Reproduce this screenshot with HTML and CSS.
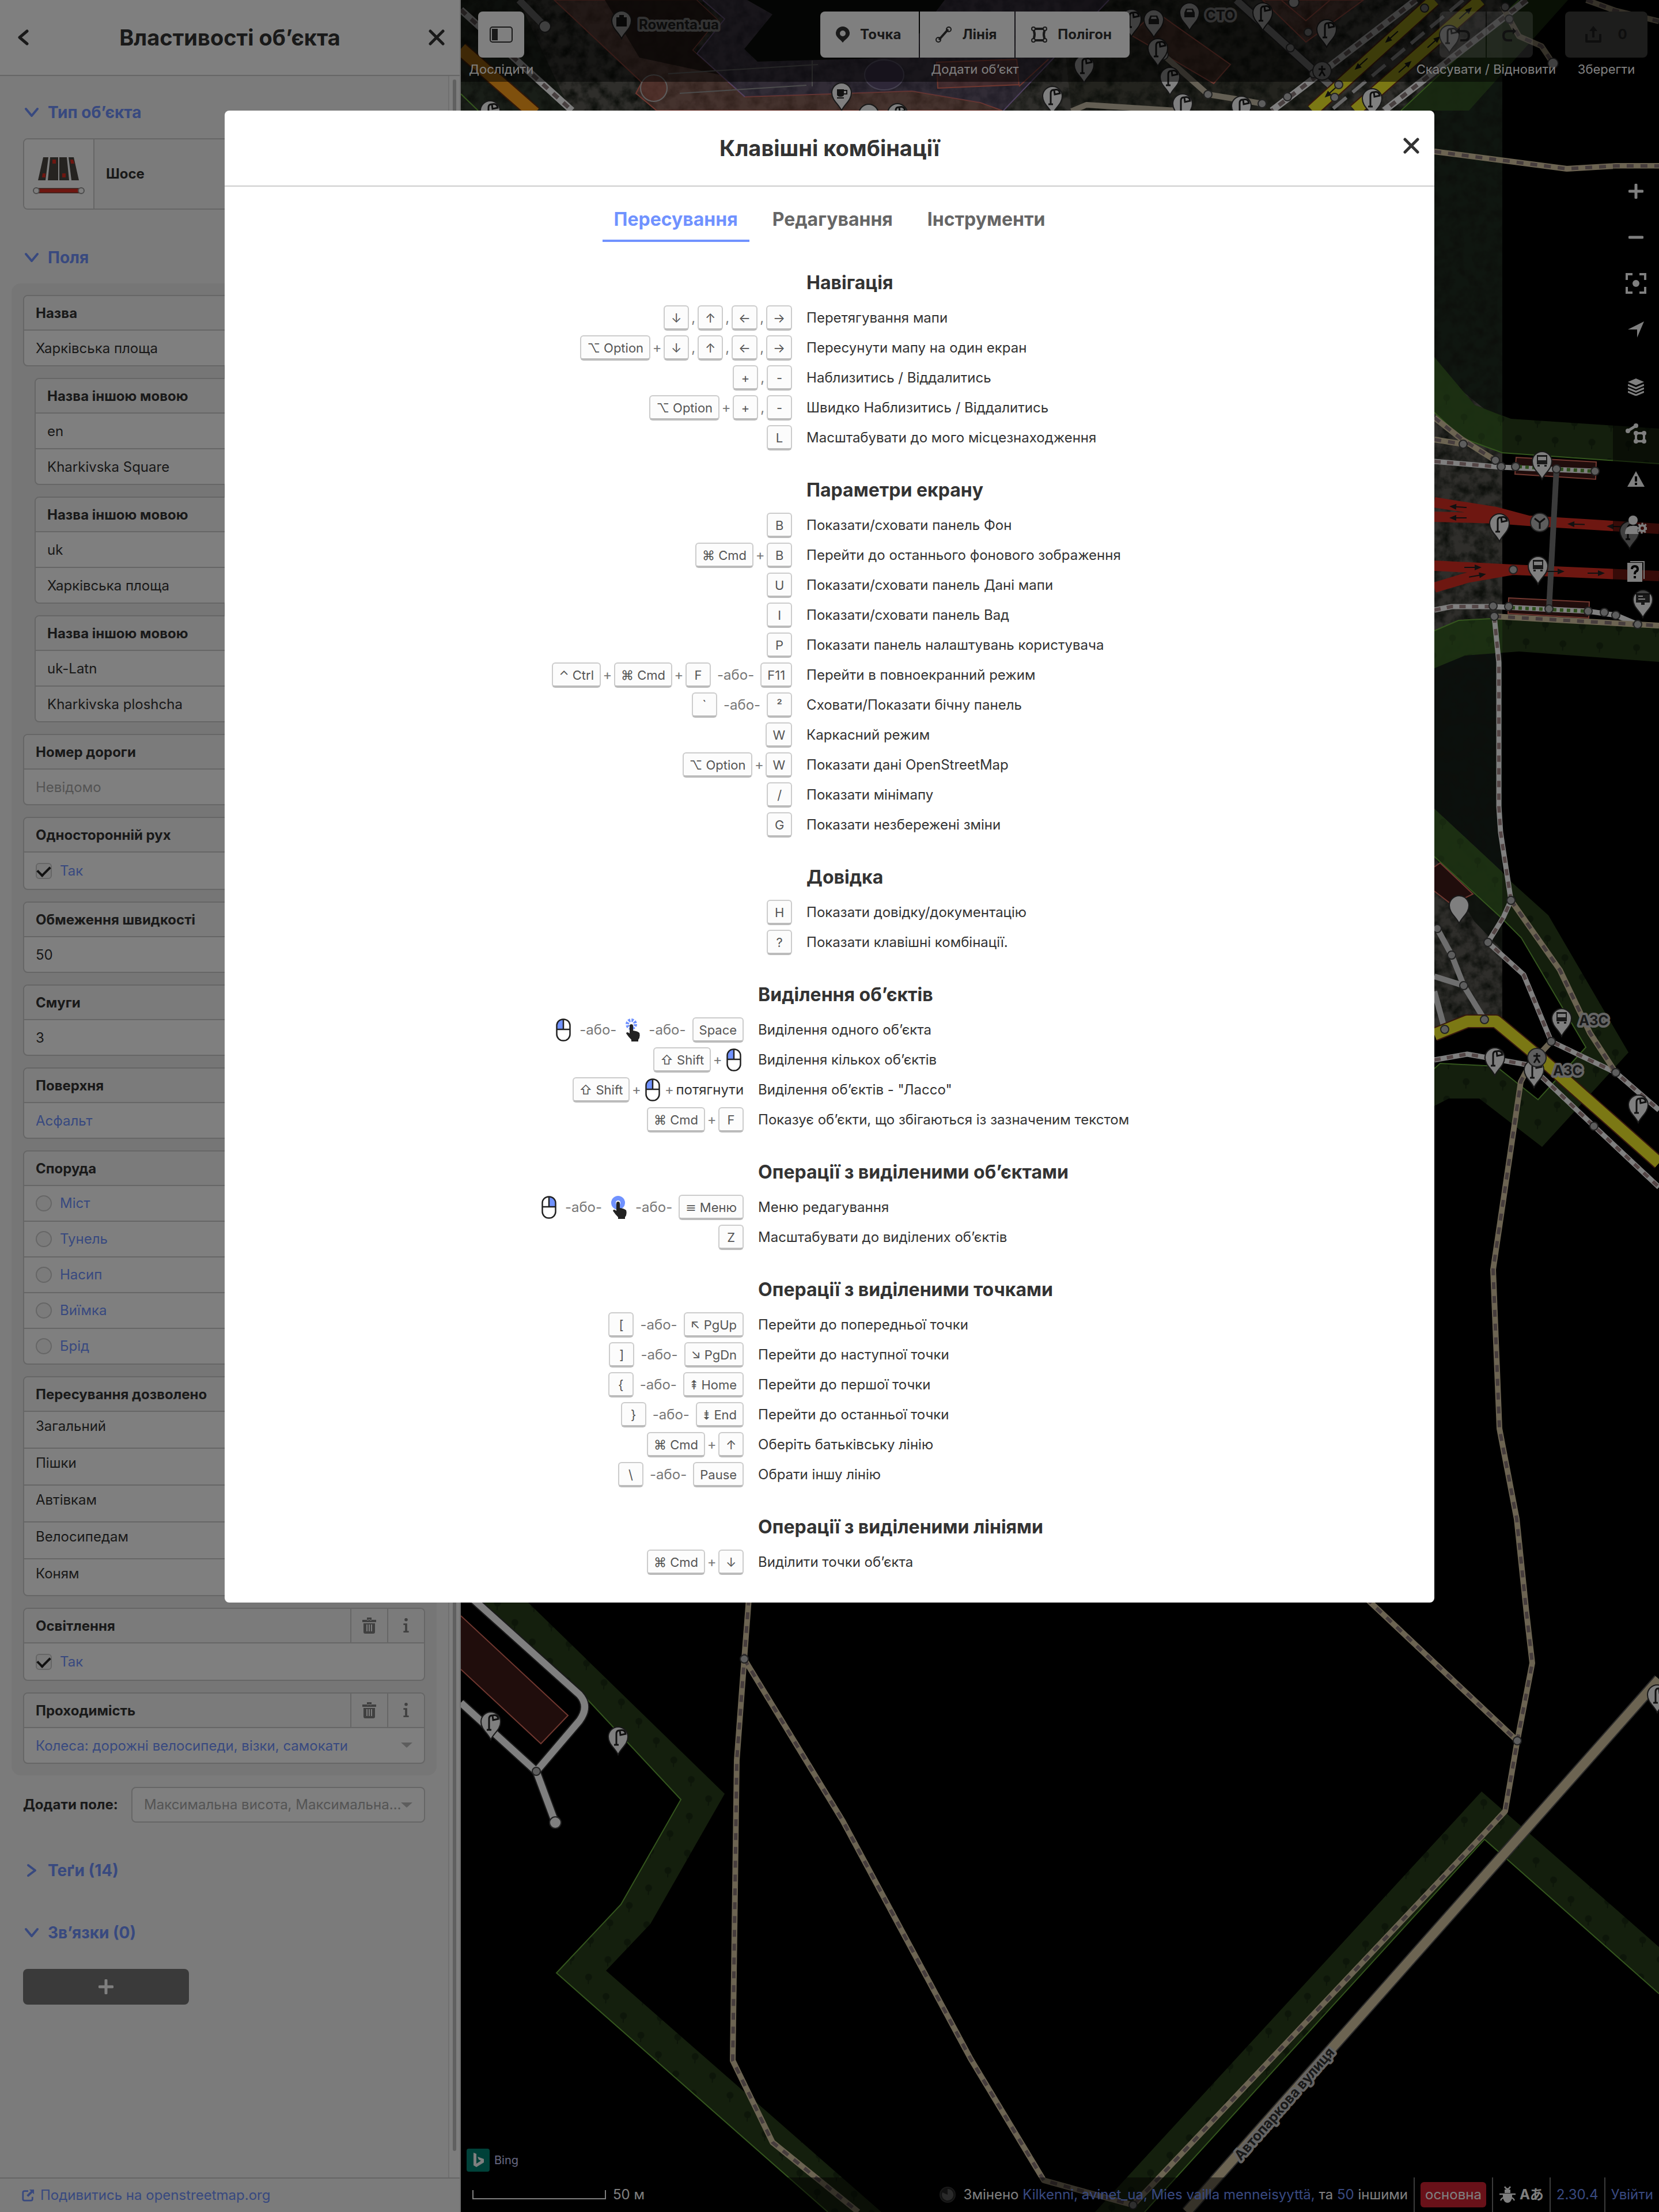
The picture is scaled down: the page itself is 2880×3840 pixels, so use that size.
FILE: index.html
```html
<!DOCTYPE html>
<html lang="uk">
<head>
<meta charset="utf-8">
<meta name="viewport" content="width=device-width, initial-scale=1">
<title>Властивості обʼєкта</title>
<link rel="stylesheet" href="styles.css">
</head>
<body>
<svg class="sprite" aria-hidden="true">
  <symbol id="i-close" viewBox="0 0 28 28"><path d="M3 3L25 25M25 3L3 25" fill="none" stroke="currentColor" stroke-width="5" stroke-linecap="round"/></symbol>
  <symbol id="i-back" viewBox="0 0 28 28"><path d="M21 3L8 14L21 25" fill="none" stroke="currentColor" stroke-width="5" stroke-linecap="round" stroke-linejoin="round"/></symbol>
  <symbol id="i-down" viewBox="0 0 24 24"><path d="M2 6L12 18L22 6" fill="none" stroke="currentColor" stroke-width="4" stroke-linecap="round" stroke-linejoin="round"/></symbol>
  <symbol id="i-right" viewBox="0 0 24 24"><path d="M6 3L18 12L6 21" fill="none" stroke="currentColor" stroke-width="4" stroke-linecap="round" stroke-linejoin="round"/></symbol>
  <symbol id="i-trash" viewBox="0 0 24 28"><path d="M0 4h24v4H0zM8 0h8v5h-3V3h-2v2H8zM2 10h20v15q0 3-3 3H5q-3 0-3-3zM7 12v12h2V12zm4 0v12h2V12zm4 0v12h2V12z" fill="currentColor" fill-rule="evenodd"/></symbol>
  <symbol id="i-info" viewBox="0 0 12 28"><circle cx="6" cy="3" r="3" fill="currentColor"/><path d="M1 10h7v14h3v3H1v-3h3V13H1z" fill="currentColor"/></symbol>
  <symbol id="i-ext" viewBox="0 0 24 24"><path d="M12 4H5Q2 4 2 7v12q0 3 3 3h12q3 0 3-3v-4" fill="none" stroke="currentColor" stroke-width="3"/><path d="M14 1h9v9l-3-3-8 8-3-3 8-8z" fill="currentColor"/></symbol>
  <symbol id="i-side" viewBox="0 0 40 28"><rect x="1" y="1" width="38" height="26" rx="4" fill="none" stroke="currentColor" stroke-width="2"/><path d="M4 4h10v20H4z" fill="currentColor"/></symbol>
  <symbol id="i-point" viewBox="0 0 24 28"><path d="M12 0a12 12 0 0 1 12 12c0 7-8 10-12 16C8 22 0 19 0 12A12 12 0 0 1 12 0zm0 7a5 5 0 1 0 0 10a5 5 0 0 0 0-10z" fill="currentColor"/></symbol>
  <symbol id="i-line" viewBox="0 0 28 28"><path d="M6 23L22 5" stroke="currentColor" stroke-width="4"/><circle cx="23" cy="5" r="4" fill="none" stroke="currentColor" stroke-width="2"/><circle cx="5" cy="23" r="4" fill="none" stroke="currentColor" stroke-width="2"/></symbol>
  <symbol id="i-area" viewBox="0 0 28 28"><path d="M5 4h18v4q-2 6 0 12v4H5v-4q2-6 0-12z" fill="none" stroke="currentColor" stroke-width="4"/><g fill="#fff" stroke="currentColor" stroke-width="2"><circle cx="4" cy="4" r="3"/><circle cx="24" cy="4" r="3"/><circle cx="4" cy="24" r="3"/><circle cx="24" cy="24" r="3"/></g></symbol>
  <symbol id="i-undo" viewBox="0 0 28 28"><path d="M9 2L3 8l6 6V10h8q6 0 6 6t-6 6h-7v4h7q10 0 10-10T17 6H9z" fill="currentColor"/></symbol>
  <symbol id="i-redo" viewBox="0 0 28 28"><path d="M19 2l6 6-6 6V10h-8q-6 0-6 6t6 6h7v4h-7Q1 26 1 16T11 6h8z" fill="currentColor"/></symbol>
  <symbol id="i-save" viewBox="0 0 28 30"><path d="M2 14v13h24V14" fill="none" stroke="currentColor" stroke-width="4" stroke-linejoin="round"/><path d="M14 0l7 9h-5v11h-4V9H7z" fill="currentColor"/></symbol>
  <symbol id="i-plus" viewBox="0 0 26 26"><path d="M13 2v22M2 13h22" stroke="currentColor" stroke-width="5" stroke-linecap="round"/></symbol>
  <symbol id="i-minus" viewBox="0 0 26 26"><path d="M2 13h22" stroke="currentColor" stroke-width="5" stroke-linecap="round"/></symbol>
  <symbol id="i-zoomto" viewBox="0 0 36 36"><path d="M2 12V2h10M24 2h10v10M34 24v10H24M12 34H2V24" fill="none" stroke="currentColor" stroke-width="4"/><circle cx="18" cy="18" r="6" fill="currentColor"/></symbol>
  <symbol id="i-geo" viewBox="0 0 28 28"><path d="M28 0L16 28V14H0z" fill="currentColor"/></symbol>
  <symbol id="i-layers" viewBox="0 0 28 30"><path d="M14 0l14 6-14 6L0 6z" fill="currentColor"/><path d="M0 11l14 6 14-6M0 17l14 6 14-6M0 23l14 6 14-6" fill="none" stroke="currentColor" stroke-width="3"/></symbol>
  <symbol id="i-data" viewBox="0 0 36 36"><path d="M4 14L18 5" stroke="currentColor" stroke-width="5"/><circle cx="4" cy="14" r="4" fill="currentColor"/><circle cx="18" cy="5" r="4" fill="currentColor"/><path d="M18 18h14v14H18z" fill="none" stroke="currentColor" stroke-width="4"/><g fill="currentColor"><circle cx="18" cy="18" r="4"/><circle cx="32" cy="18" r="4"/><circle cx="18" cy="32" r="4"/><circle cx="32" cy="32" r="4"/></g></symbol>
  <symbol id="i-warn" viewBox="0 0 30 28"><path d="M15 0l15 27H0zM13 9v9h4V9zm0 11v4h4v-4z" fill="currentColor" fill-rule="evenodd"/></symbol>
  <symbol id="i-user" viewBox="0 0 38 34"><circle cx="14" cy="8" r="8" fill="currentColor"/><path d="M0 32q0-14 12-14h8q4 2 2 6t2 8z" fill="currentColor"/><circle cx="30" cy="22" r="5" fill="none" stroke="currentColor" stroke-width="4"/><circle cx="30" cy="22" r="8" fill="none" stroke="currentColor" stroke-width="3" stroke-dasharray="3 3"/></symbol>
  <symbol id="i-help" viewBox="0 0 30 36"><path d="M5 1h24v30" fill="none" stroke="currentColor" stroke-width="2"/><path d="M0 3h26v33H0z" fill="currentColor"/><path d="M8 14q0-5 5-5t5 5q0 3-3 4-2 1-2 5" fill="none" stroke="#000" stroke-width="4"/><path d="M11 26h4v4h-4z"/></symbol>
  <symbol id="i-mouse-l" viewBox="0 0 26 40"><path d="M13 2v17H2v-6Q2 2 13 2z" fill="#7092ff"/><rect x="1.500" y="1.500" width="23" height="37" rx="11" fill="none" stroke="#222" stroke-width="2.500"/><path d="M2 19h22M13 2v17" stroke="#222" stroke-width="2.500"/></symbol>
  <symbol id="i-mouse-r" viewBox="0 0 26 40"><path d="M13 2v17h11v-6Q24 2 13 2z" fill="#7092ff"/><rect x="1.500" y="1.500" width="23" height="37" rx="11" fill="none" stroke="#222" stroke-width="2.500"/><path d="M2 19h22M13 2v17" stroke="#222" stroke-width="2.500"/></symbol>
  <symbol id="i-hand" viewBox="0 0 26 40"><path d="M11 10q3 0 3 3v8q8 1 11 4 2 7-2 12v3H11v-3Q6 32 2 26q1-4 6 0V13q0-3 3-3z" fill="#222"/></symbol>
  <symbol id="i-tap" viewBox="0 0 26 40"><circle cx="11" cy="10" r="7" fill="none" stroke="#7092ff" stroke-width="6" stroke-dasharray="3.500 2"/><use href="#i-hand"/></symbol>
  <symbol id="i-hold" viewBox="0 0 28 40"><circle cx="13" cy="12" r="8" fill="none" stroke="#7092ff" stroke-width="8"/><use href="#i-hand" width="26" height="40" x="2"/></symbol>
  <symbol id="i-bug" viewBox="0 0 30 30"><g fill="none" stroke="currentColor" stroke-width="2.500"><path d="M10 1q5 8 10 0M1 14h28M3 25q3-6 6-4M27 25q-3-6-6-4"/></g><path d="M10 6h10v6H10zM7 13h16v7q-2 9-8 9t-8-9z" fill="currentColor"/></symbol>
  <symbol id="i-bing" viewBox="0 0 40 40"><rect width="40" height="40" rx="4" fill="#008373"/><path d="M12 7l5 2v17l8-5-4-2-2-5 11 4v6l-13 8-5-3z" fill="#fff"/></symbol>
  <symbol id="i-spin" viewBox="0 0 28 28"><circle cx="14" cy="14" r="13" fill="#222" stroke="#333" stroke-width="2"/><path d="M14 14V4a10 10 0 1 1-9 6z" fill="#555"/></symbol>
</svg>

<div class="app">
  <aside class="sidebar">
    <header class="side-head">
      <button class="icon-btn" aria-label="Назад"><svg width="28" height="28"><use href="#i-back"/></svg></button>
      <h2>Властивості обʼєкта</h2>
      <button class="icon-btn" aria-label="Закрити"><svg width="28" height="28"><use href="#i-close"/></svg></button>
    </header>
    <div class="side-body">
      <div class="side-content">
        <h3 class="section"><a href="#type"><svg width="24" height="24"><use href="#i-down"/></svg>Тип обʼєкта</a></h3>
        <button class="preset">
          <span class="preset-icon"><svg width="90" height="66" viewBox="0 0 90 66"><g fill="#4a4641"><path d="M18 2h9l-5 40H9z"/><path d="M30 2h14v40H26z"/><path d="M46 2h13l4 40H46z"/><path d="M62 2h9l9 40H67z"/></g><g fill="#dd2f22"><path d="M17 30h5v7h-6zM34 6h6v7h-6zM51 30h6v7h-6zM65 6h5l2 7h-6z"/></g><path d="M6 60h78" stroke="#70372f" stroke-width="9"/><path d="M6 60h78" stroke="#dd2f22" stroke-width="6"/><circle cx="6" cy="60" r="5" fill="#fff" stroke="#999" stroke-width="2"/><circle cx="84" cy="60" r="5" fill="#fff" stroke="#999" stroke-width="2"/></svg></span>
          <span class="preset-name">Шосе</span>
        </button>
        <h3 class="section"><a href="#fields"><svg width="24" height="24"><use href="#i-down"/></svg>Поля</a></h3>
        <div class="fields">
          <div class="field"><label class="field-label" for="f1">Назва</label><input class="row" id="f1" value="Харківська площа"></div>
          <div class="field nested"><label class="field-label" for="f2">Назва іншою мовою</label><input class="row" id="f2" value="en"><input class="row" aria-label="Назва" value="Kharkivska Square"></div>
          <div class="field nested"><label class="field-label" for="f3">Назва іншою мовою</label><input class="row" id="f3" value="uk"><input class="row" aria-label="Назва" value="Харківська площа"></div>
          <div class="field nested"><label class="field-label" for="f4">Назва іншою мовою</label><input class="row" id="f4" value="uk-Latn"><input class="row" aria-label="Назва" value="Kharkivska ploshcha"></div>
          <div class="field"><label class="field-label" for="f5">Номер дороги</label><input class="row" id="f5" placeholder="Невідомо"></div>
          <div class="field"><span class="field-label">Односторонній рух</span><label class="row check-row"><input class="tick" type="checkbox" checked>Так</label></div>
          <div class="field"><label class="field-label" for="f6">Обмеження швидкості</label><input class="row" id="f6" value="50"></div>
          <div class="field"><label class="field-label" for="f7">Смуги</label><input class="row" id="f7" value="3"></div>
          <div class="field"><label class="field-label" for="f8">Поверхня</label><input class="row linkish" id="f8" value="Асфальт"></div>
          <div class="field"><span class="field-label">Споруда</span>
            <label class="row"><input class="tick round" type="radio" name="structure">Міст</label>
            <label class="row"><input class="tick round" type="radio" name="structure">Тунель</label>
            <label class="row"><input class="tick round" type="radio" name="structure">Насип</label>
            <label class="row"><input class="tick round" type="radio" name="structure">Виїмка</label>
            <label class="row"><input class="tick round" type="radio" name="structure">Брід</label>
          </div>
          <div class="field"><span class="field-label">Пересування дозволено</span>
            <label class="row access"><span>Загальний</span><input></label>
            <label class="row access"><span>Пішки</span><input></label>
            <label class="row access"><span>Автівкам</span><input></label>
            <label class="row access"><span>Велосипедам</span><input></label>
            <label class="row access"><span>Коням</span><input></label>
          </div>
          <div class="field"><div class="field-label"><span>Освітлення</span><button aria-label="Вилучити"><svg width="24" height="28"><use href="#i-trash"/></svg></button><button aria-label="Довідка"><svg width="12" height="26"><use href="#i-info"/></svg></button></div><label class="row check-row"><input class="tick" type="checkbox" checked>Так</label></div>
          <div class="field"><div class="field-label"><label for="f9">Проходимість</label><button aria-label="Вилучити"><svg width="24" height="28"><use href="#i-trash"/></svg></button><button aria-label="Довідка"><svg width="12" height="26"><use href="#i-info"/></svg></button></div><div class="combo"><input class="row linkish" id="f9" value="Колеса: дорожні велосипеди, візки, самокати"><i class="caret"></i></div></div>
        </div>
        <div class="add-field"><label for="f10">Додати поле:</label><div class="combo boxed"><input id="f10" placeholder="Максимальна висота, Максимальна…"><i class="caret"></i></div></div>
        <h3 class="section"><a href="#tags"><svg width="24" height="24"><use href="#i-right"/></svg>Теґи (14)</a></h3>
        <h3 class="section"><a href="#relations"><svg width="24" height="24"><use href="#i-down"/></svg>Звʼязки (0)</a></h3>
        <button class="add-relation" aria-label="Додати звʼязок"><svg width="26" height="26"><use href="#i-plus"/></svg></button>
      </div>
      <div class="track"><div class="thumb"></div></div>
    </div>
    <footer class="side-foot"><a href="#osm"><svg width="22" height="22"><use href="#i-ext"/></svg>Подивитись на openstreetmap.org</a></footer>
  </aside>

  <main class="map">
    <svg class="canvas" viewBox="800 0 2080 3840" preserveAspectRatio="xMinYMin slice" aria-hidden="true">
      <defs>
        <pattern id="trees" width="64" height="64" patternUnits="userSpaceOnUse" patternTransform="rotate(3)"><rect width="64" height="64" fill="#2a411c"/><g fill="#1c2e14"><ellipse cx="16" cy="14" rx="6" ry="6"/><path d="M15 14h2v12h-2z"/><ellipse cx="48" cy="46" rx="6" ry="6"/><path d="M47 46h2v12h-2z"/></g></pattern>
        <filter id="ground" x="0" y="0" width="100%" height="100%" color-interpolation-filters="sRGB"><feTurbulence type="fractalNoise" baseFrequency="0.05" numOctaves="4" seed="4"/><feColorMatrix values="0 0 0 0 0.100  0 0 0 0 0.120  0 0 0 0 0.090  2.200 0 0 0 -0.800"/></filter>
        <g id="pin"><path d="M0 0C-5-11-17-18-17-31A17 17 0 1 1 17-31C17-18 5-11 0 0z" fill="#fff" stroke="#333" stroke-width="2"/></g>
        <g id="lamp"><use href="#pin"/><path d="M-7-17h8M-3-18v-18q0-6 5-6h2M3-42q9-2 10 6l-9 2z" fill="none" stroke="#222" stroke-width="3"/></g>
        <g id="bus"><use href="#pin"/><path d="M-9-42H9v16H-9z" fill="#333"/><path d="M-7-39H7v6H-7z" fill="#fff"/><path d="M-8-25h4v3h-4zM4-25h4v3H4z" fill="#333"/></g>
        <g id="sign"><use href="#pin"/><path d="M-12-42H12v16H3v4h-6v-4h-9z" fill="#333"/><path d="M-8-37h8M-8-32H4" stroke="#fff" stroke-width="2"/></g>
        <g id="car"><use href="#pin"/><path d="M-6-38H6l3 7v8H-9v-8z" fill="#333"/><path d="M-4-36h8l1 4H-5z" fill="#fff"/></g>
        <circle id="node" r="7" fill="#bbb" stroke="#444" stroke-width="2"/>
        <g id="arrow"><path d="M-16 0H6" stroke="#222" stroke-width="2"/><path d="M14 0L2-5V5z" fill="#222"/></g>
      </defs>
      <rect x="800" width="2080" height="3840" fill="#000"/>
      <path d="M800 0H2608V1768L2490 1790V192H800z" fill="#5e5c56"/>
      <path d="M800 0H900L990 192H800z" fill="#333c30"/>
      <path d="M2430 192L2637 0H2608V735L2490 640V192z" fill="#1f2c20"/>
      <path d="M2490 1150L2608 1120V1514L2490 1404z" fill="#16201a"/>
      <path d="M2490 1487L2608 1595V1650L2560 1600z" fill="#20281e"/>
      <path d="M1840 0H2150L2320 157 2280 192H1860z" fill="#46463c"/>
      <path d="M800 0H2608V1768H2490V192H800z" filter="url(#ground)"/>
      <path d="M1297 0L1341 25 1292 85 1315 107 1564 100 1640 0z" fill="#101410"/>
      <path d="M962 0L1114 143 1104 162 1140 192H1740L1702 178 1583 158 1293 168 1202 87 1245 34 1209 0z" fill="#b87064" fill-opacity=".5" stroke="#e06e5f" stroke-width="2"/>
      <path d="M1050 0H1209L1245 34 1202 87 1250 130 1110 100z" fill="#1e1410" fill-opacity=".7"/>
      <path d="M1220 0L1258 33 1210 93 1293 168 1583 158 1702 178 1742 192 1925 0H1640L1564 100 1315 107 1292 85 1341 25 1297 0z" fill="#6a5584" fill-opacity=".5"/>
      <path d="M1220 0L1258 33 1210 93 1293 168M1742 192L1925 0" fill="none" stroke="#a081c0" stroke-width="2"/>
      <path d="M1160 128L1420 112M1180 162L1400 148M1410 105v45" stroke="#999" stroke-width="2"/>
      <ellipse cx="1135" cy="153" rx="23" ry="23" fill="#c06050" fill-opacity=".4" stroke="#bbb" stroke-width="2"/>
      <ellipse cx="1535" cy="130" rx="34" ry="26" fill="#5c4f70" stroke="#8a80a0" stroke-width="2"/>
      <path d="M1626 108L1765 103 1769 147 1628 153zM1769 150L1820 103" fill="#c06050" fill-opacity=".4" stroke="#e06e5f" stroke-width="2"/>
      <path d="M2006 20L2136 112 2107 145 1962 60zM2192 0L2267 73 2367 0zM2224 0L2267 36 2309 0z" fill="#c06050" fill-opacity=".35" stroke="#e06e5f" stroke-width="2"/>
      <path d="M2637 0L2432 192H2550L2722 0z" fill="#3d6b26" fill-opacity=".6"/>
      <g fill="url(#trees)" fill-opacity=".95">
        <path d="M2490 620L2560 703 2623 727 2880 744V805L2608 786 2537 760 2490 716z"/>
        <path d="M2490 1095L2532 1077 2607 1073 2880 1090V1149L2637 1131 2543 1138 2490 1160z"/>
        <path d="M2490 1404L2608 1514 2617 1525 2688 1589 2827 1827 2677 1991 2568 1907H2515L2490 1920V1855L2500 1846 2597 1851 2670 1909 2753 1818 2641 1628 2608 1595 2490 1487z"/>
        <path d="M830 2782L1012 2942 1182 3124 1078 3306 966 3425 1437 3840H1530L1052 3421 1129 3340 1258 3114 917 2782z"/>
        <path d="M2572 3110L2880 3380V3461L2577 3193 1987 3840H1901z"/>
      </g>
      <g fill="#4c8a30" fill-opacity=".4"><path d="M2490 620L2560 703 2608 722V786L2537 760 2490 716z"/><path d="M2490 1095L2532 1077 2608 1073V1133L2543 1138 2490 1160z"/><path d="M2490 1404L2608 1514V1595L2490 1487z"/></g>
      <g fill="none" stroke="#68ac3a" stroke-width="2">
        <path d="M2490 716L2537 760 2608 786 2880 805M2490 1095L2532 1077 2607 1073 2880 1090M2490 1487L2608 1595 2641 1628 2753 1818 2670 1909 2597 1851 2500 1846 2490 1855M830 2782L1012 2942 1182 3124 1078 3306 966 3425 1437 3840M2880 3461L2577 3193 1987 3840M800 163L830 192M2637 0L2432 192"/>
      </g>
      <g fill="#401a18" stroke="#e06e5f" stroke-width="2"><path d="M800 2805L986 2978 939 3027 800 2898"/><path d="M2632 794L2771 802 2770 832 2630 823zM2619 1038L2759 1045 2758 1073 2618 1065zM2490 1505L2500 1498 2557 1552 2520 1570 2490 1547"/></g>
      <g fill="none" stroke-linejoin="round">
        <path d="M800 85L928 197" stroke="#6a3010" stroke-width="26"/><path d="M800 85L928 197" stroke="#ffa01a" stroke-width="22"/>
        <g stroke="#333" stroke-width="16"><path d="M820 2775L1006 2942Q1024 2962 1006 2987L931 3075 964 3164M800 2956L931 3075M2146 0L2319 157"/></g>
        <g stroke="#fff" stroke-width="12"><path d="M820 2775L1006 2942Q1024 2962 1006 2987L931 3075 964 3164M800 2956L931 3075"/><path d="M2495 1612L2520 1658 2541 1711 2577 1770M2490 1695L2541 1711M2490 1721L2508 1787" stroke="#ddd" stroke-width="10"/></g>
        <path d="M901 0L946 46M2146 0L2319 157" stroke="#aaa" stroke-width="12"/>
        <path d="M2019 95L2097 164 2153 173 2191 180M1860 193L1886 182 2042 192" stroke="#c8bfa8" stroke-width="10"/>
        <path d="M2880 2915L2060 3840" stroke="#555" stroke-width="20"/><path d="M2880 2915L2060 3840" stroke="#d8c8a4" stroke-width="16"/>
        <g stroke="#70301c" stroke-width="24"><path d="M2490 0L2278 192M2570 0L2352 192M2490 1796L2547 1773H2597L2680 1842 2880 2019"/></g>
        <g stroke="#f6f028" stroke-width="20"><path d="M2490 0L2278 192M2570 0L2352 192M2490 1796L2547 1773H2597L2680 1842 2880 2019"/></g>
        <path d="M2540 0L2310 192" stroke="#ccc" stroke-width="6" stroke-dasharray="30 14"/>
        <g stroke="#dd2f22" stroke-width="18"><path d="M2490 872L2597 889 2653 904 2880 918M2490 897L2600 900 2653 904M2490 982L2627 989 2880 1000M2490 1020L2547 1003 2627 989"/></g>
        <path d="M2702 815L2689 1057" stroke="#777" stroke-width="10"/>
        <g stroke="#fff" stroke-width="12"><path d="M800 17L993 192M2458 0L2208 192M2650 0L2403 192"/></g>
        <g stroke="#908080" stroke-width="7" stroke-dasharray="12 12"><path d="M800 17L993 192M2458 0L2208 192M2650 0L2403 192"/></g>
        <g stroke="#fff" stroke-width="9"><path d="M2490 801L2606 811 2769 818M2490 1059L2520 1053H2592L2757 1061 2805 1068 2843 1084M2594 1070L2602 1150V1400L2605 1445 2623 1563 2610 1592 2583 1636 2645 1692 2693 1808 2805 1862 2880 1927M2490 1840L2547 1830 2655 1849 2767 1955 2880 2061"/></g>
        <g stroke="#a88c8c" stroke-width="6" stroke-dasharray="11 11"><path d="M2490 801L2606 811M2490 1059L2520 1053H2592M2594 1070L2602 1150V1400L2605 1445 2623 1563 2610 1592 2583 1636 2645 1692 2693 1808 2805 1862 2880 1927M2490 1840L2547 1830 2655 1849 2767 1955 2880 2061"/></g>
        <path d="M2636 810L2764 818M2624 1055L2752 1061" stroke="#5f9f3a" stroke-width="6" stroke-dasharray="6 6"/>
        <path d="M1300 2775L1292 2880 1279 3056 1272 3577 1341 3719 1490 3840M1292 2880L1463 3161 1685 3574 1812 3785 1967 3828M2372 2775L2634 3022M2655 1849L2640 1878 2592 2204 2603 2480 2633 2637 2650 2800 2660 2887 2634 3022 2613 3144 2573 3187 1967 3828M2490 263L2720 293 2805 288H2880M2490 725L2537 762 2597 800M2490 763L2540 771M2594 1070L2880 1086M2623 1563L2708 1684 2760 1793 2805 1862M2754 0L2803 18 2880 37M2608 10L2620 33 2637 63 2676 80 2696 110M2655 1849L2693 1808" stroke="#d8c8a4" stroke-width="10"/>
        <path d="M1300 2775L1292 2880 1279 3056 1272 3577 1341 3719 1490 3840M1292 2880L1463 3161 1685 3574 1812 3785 1967 3828M2372 2775L2634 3022M2655 1849L2640 1878 2592 2204 2603 2480 2633 2637 2650 2800 2660 2887 2634 3022 2613 3144 2573 3187 1967 3828M2490 263L2720 293 2805 288H2880M2490 725L2537 762 2597 800M2490 763L2540 771M2594 1070L2880 1086M2623 1563L2708 1684 2760 1793 2805 1862M2754 0L2803 18 2880 37M2608 10L2620 33 2637 63 2676 80 2696 110" stroke="#8c7a7a" stroke-width="6" stroke-dasharray="12 12"/>
      </g>
      <use href="#arrow" transform="translate(2415 65) rotate(138)"/><use href="#arrow" transform="translate(2362 112) rotate(138)"/><use href="#arrow" transform="translate(2310 160) rotate(138)"/>
      <use href="#arrow" transform="translate(2545 22) rotate(-42)"/><use href="#arrow" transform="translate(2490 72) rotate(-42)"/><use href="#arrow" transform="translate(2440 115) rotate(-42)"/>
      <use href="#arrow" transform="translate(2530 880) rotate(184)"/><use href="#arrow" transform="translate(2530 899) rotate(180)"/><use href="#arrow" transform="translate(2735 910) rotate(182)"/><use href="#arrow" transform="translate(2803 914) rotate(182)"/>
      <use href="#arrow" transform="translate(2558 985)"/><use href="#arrow" transform="translate(2566 999) rotate(-10)"/><use href="#arrow" transform="translate(2702 992)"/><use href="#arrow" transform="translate(2772 995)"/>
      <use href="#node" x="2473" y="14"/><use href="#node" x="2271" y="56"/><use href="#node" x="2240" y="83"/><use href="#node" x="2280" y="128"/><use href="#node" x="2324" y="147"/><use href="#node" x="2317" y="169"/><use href="#node" x="2235" y="168"/><use href="#node" x="2191" y="180"/><use href="#node" x="2097" y="164"/><use href="#node" x="2613" y="12"/><use href="#node" x="2620" y="33"/><use href="#node" x="2540" y="771"/><use href="#node" x="2596" y="799"/><use href="#node" x="2606" y="810"/><use href="#node" x="2631" y="810"/><use href="#node" x="2769" y="818"/><use href="#node" x="2702" y="814"/><use href="#node" x="2627" y="989"/><use href="#node" x="2592" y="1052"/><use href="#node" x="2594" y="1070"/><use href="#node" x="2619" y="1053"/><use href="#node" x="2689" y="1057"/><use href="#node" x="2757" y="1061"/><use href="#node" x="2785" y="1063"/><use href="#node" x="2805" y="1068"/><use href="#node" x="2843" y="1084"/><use href="#node" x="2623" y="1563"/><use href="#node" x="2583" y="1636"/><use href="#node" x="2693" y="1808"/><use href="#node" x="2805" y="1862"/><use href="#node" x="2767" y="1955"/><use href="#node" x="2577" y="1770"/><use href="#node" x="2541" y="1711"/><use href="#node" x="2520" y="1658"/><use href="#node" x="2508" y="1787"/><use href="#node" x="2495" y="1612"/><use href="#node" x="1292" y="2880"/><use href="#node" x="2634" y="3022"/><use href="#node" x="931" y="3075"/><use href="#node" x="1967" y="3828"/>
      <g fill="#fff" stroke="#444" stroke-width="2"><circle cx="946" cy="46" r="10"/><circle cx="2019" cy="95" r="9"/><circle cx="2246" cy="4" r="9"/><circle cx="2696" cy="110" r="9"/><circle cx="964" cy="3164" r="10"/></g>
      <g fill="#bbb" stroke="#444" stroke-width="2"><circle cx="2295" cy="123" r="16"/><circle cx="2673" cy="907" r="16"/></g>
      <path d="M2673 918V907l-9-7M2673 907l9-7M2295 114v10l-5 8M2295 124l5 8M2289 120h12" fill="none" stroke="#222" stroke-width="3"/>
      <use href="#pin" x="1079" y="67"/><path d="M1071 31h16v14h-16zM1076 31v-4h6v4" fill="#222" stroke="#222" stroke-width="2"/>
      <use href="#pin" x="1461" y="192"/><path d="M1453 155h12v10q-1 3-6 3t-6-3z" fill="#222"/><path d="M1465 157h5v6h-5M1453 170h12" fill="none" stroke="#222" stroke-width="2"/>
      <use href="#pin" x="1508" y="229"/><use href="#lamp" x="1558" y="228"/><use href="#lamp" x="851" y="223"/><use href="#lamp" x="1827" y="198"/><use href="#lamp" x="1964" y="64"/><use href="#car" x="2003" y="65"/><use href="#car" x="2065" y="53"/><use href="#lamp" x="2192" y="53"/><use href="#lamp" x="2303" y="82"/><use href="#lamp" x="2010" y="115"/><use href="#lamp" x="1882" y="144"/><use href="#lamp" x="2031" y="165"/><use href="#lamp" x="2053" y="211"/><use href="#lamp" x="2155" y="215"/><use href="#lamp" x="2382" y="202"/><use href="#lamp" x="2516" y="92"/>
      <use href="#bus" x="2677" y="832"/><use href="#lamp" x="2603" y="940"/><use href="#bus" x="2670" y="1014"/><use href="#lamp" x="2829" y="953"/><use href="#sign" x="2852" y="1072"/><use href="#pin" x="2533" y="1603"/><use href="#bus" x="2711" y="1799"/><use href="#lamp" x="2595" y="1867"/><use href="#lamp" x="2663" y="1888"/><use href="#lamp" x="2844" y="1949"/>
      <g><circle cx="2668" cy="1836" r="16" fill="#bbb" stroke="#444" stroke-width="2"/><path d="M2668 1828v9l-5 8M2668 1837l5 8M2662 1833h12" fill="none" stroke="#222" stroke-width="3"/></g>
      <use href="#lamp" x="852" y="3020"/><use href="#lamp" x="1073" y="3046"/><use href="#lamp" x="2877" y="2973"/>
      <g class="map-label"><text x="1109" y="51">Rowenta.ua</text><text x="2093" y="35">СТО</text><text x="2741" y="1780">АЗС</text><text x="2696" y="1867">АЗС</text><text transform="translate(2154 3752) rotate(-49)">Автопаркова вулиця</text></g>
    </svg>

    <div class="topbar">
      <div class="tool"><button class="bar-btn square" aria-label="Дослідити"><svg width="40" height="28"><use href="#i-side"/></svg></button><span>Дослідити</span></div>
      <div class="tool"><div class="joined"><button class="bar-btn"><svg width="24" height="28"><use href="#i-point"/></svg>Точка</button><button class="bar-btn"><svg width="28" height="28"><use href="#i-line"/></svg>Лінія</button><button class="bar-btn"><svg width="28" height="28"><use href="#i-area"/></svg>Полігон</button></div><span>Додати обʼєкт</span></div>
      <div class="tool-pair">
        <div class="tool"><div class="joined"><button class="bar-btn square off" disabled aria-label="Скасувати"><svg width="28" height="28"><use href="#i-undo"/></svg></button><button class="bar-btn square off" disabled aria-label="Відновити"><svg width="28" height="28"><use href="#i-redo"/></svg></button></div><span>Скасувати / Відновити</span></div>
        <div class="tool"><button class="bar-btn save" disabled><svg width="28" height="30"><use href="#i-save"/></svg>0</button><span>Зберегти</span></div>
      </div>
    </div>

    <div class="map-mid">
      <a class="bing" href="#bing"><svg width="40" height="40"><use href="#i-bing"/></svg>Bing</a>
      <div class="controls">
        <button aria-label="Наблизити"><svg width="26" height="26"><use href="#i-plus"/></svg></button>
        <button aria-label="Віддалити"><svg width="26" height="26"><use href="#i-minus"/></svg></button>
        <button aria-label="До виділеного"><svg width="36" height="36"><use href="#i-zoomto"/></svg></button>
        <button aria-label="Моє місце"><svg width="28" height="28"><use href="#i-geo"/></svg></button>
        <div class="control-gap"></div>
        <button aria-label="Фон"><svg width="28" height="30"><use href="#i-layers"/></svg></button>
        <button aria-label="Дані мапи"><svg width="36" height="36"><use href="#i-data"/></svg></button>
        <button aria-label="Вади"><svg width="30" height="28"><use href="#i-warn"/></svg></button>
        <button aria-label="Налаштування"><svg width="38" height="34"><use href="#i-user"/></svg></button>
        <button aria-label="Довідка"><svg width="30" height="36"><use href="#i-help"/></svg></button>
      </div>
    </div>

    <footer class="bottombar">
      <div class="scale"><i></i>50 м</div>
      <div class="about">
        <p><svg width="28" height="28"><use href="#i-spin"/></svg><span>Змінено <a href="#u1">Kilkenni, </a><a href="#u2">avinet_ua, </a><a href="#u3">Mies vailla menneisyyttä, </a>та <a href="#u50">50</a> іншими</span></p>
        <p><span class="badge">основна</span></p>
        <p class="tight"><svg width="30" height="30"><use href="#i-bug"/></svg><b class="lang">Aあ</b></p>
        <p><a href="#v">2.30.4</a></p>
        <p><a href="#login">Увійти</a></p>
      </div>
    </footer>
  </main>
</div>

<div class="shade">
  <section class="modal" role="dialog" aria-labelledby="mt">
    <header class="modal-head"><h2 id="mt">Клавішні комбінації</h2><button class="icon-btn" aria-label="Закрити"><svg width="28" height="28"><use href="#i-close"/></svg></button></header>
    <nav class="tabs"><a class="active" href="#nav">Пересування</a><a href="#edit">Редагування</a><a href="#tools">Інструменти</a></nav>
    <table class="keys near">
      <colgroup><col><col></colgroup>
      <tr><td></td><th>Навігація</th></tr>
      <tr><td><kbd>↓</kbd><s>,</s><kbd>↑</kbd><s>,</s><kbd>←</kbd><s>,</s><kbd>→</kbd></td><td>Перетягування мапи</td></tr>
      <tr><td><kbd>⌥ Option</kbd><u>+</u><kbd>↓</kbd><s>,</s><kbd>↑</kbd><s>,</s><kbd>←</kbd><s>,</s><kbd>→</kbd></td><td>Пересунути мапу на один екран</td></tr>
      <tr><td><kbd>+</kbd><s>,</s><kbd>-</kbd></td><td>Наблизитись / Віддалитись</td></tr>
      <tr><td><kbd>⌥ Option</kbd><u>+</u><kbd>+</kbd><s>,</s><kbd>-</kbd></td><td>Швидко Наблизитись / Віддалитись</td></tr>
      <tr><td><kbd>L</kbd></td><td>Масштабувати до мого місцезнаходження</td></tr>
      <tr><td></td><th>Параметри екрану</th></tr>
      <tr><td><kbd>B</kbd></td><td>Показати/сховати панель Фон</td></tr>
      <tr><td><kbd>⌘ Cmd</kbd><u>+</u><kbd>B</kbd></td><td>Перейти до останнього фонового зображення</td></tr>
      <tr><td><kbd>U</kbd></td><td>Показати/сховати панель Дані мапи</td></tr>
      <tr><td><kbd>I</kbd></td><td>Показати/сховати панель Вад</td></tr>
      <tr><td><kbd>P</kbd></td><td>Показати панель налаштувань користувача</td></tr>
      <tr><td><kbd>⌃ Ctrl</kbd><u>+</u><kbd>⌘ Cmd</kbd><u>+</u><kbd>F</kbd><em>-або-</em><kbd>F11</kbd></td><td>Перейти в повноекранний режим</td></tr>
      <tr><td><kbd>`</kbd><em>-або-</em><kbd>²</kbd></td><td>Сховати/Показати бічну панель</td></tr>
      <tr><td><kbd>W</kbd></td><td>Каркасний режим</td></tr>
      <tr><td><kbd>⌥ Option</kbd><u>+</u><kbd>W</kbd></td><td>Показати дані OpenStreetMap</td></tr>
      <tr><td><kbd>/</kbd></td><td>Показати мінімапу</td></tr>
      <tr><td><kbd>G</kbd></td><td>Показати незбережені зміни</td></tr>
      <tr><td></td><th>Довідка</th></tr>
      <tr><td><kbd>H</kbd></td><td>Показати довідку/документацію</td></tr>
      <tr><td><kbd>?</kbd></td><td>Показати клавішні комбінації.</td></tr>
    </table>
    <table class="keys far">
      <colgroup><col><col></colgroup>
      <tr><td></td><th>Виділення обʼєктів</th></tr>
      <tr><td><svg width="26" height="40"><use href="#i-mouse-l"/></svg><em>-або-</em><svg width="26" height="40"><use href="#i-tap"/></svg><em>-або-</em><kbd>Space</kbd></td><td>Виділення одного обʼєкта</td></tr>
      <tr><td><kbd>⇧ Shift</kbd><u>+</u><svg width="26" height="40"><use href="#i-mouse-l"/></svg></td><td>Виділення кількох обʼєктів</td></tr>
      <tr><td><kbd>⇧ Shift</kbd><u>+</u><svg width="26" height="40"><use href="#i-mouse-l"/></svg><u>+</u><span class="gesture">потягнути</span></td><td>Виділення обʼєктів - "Лассо"</td></tr>
      <tr><td><kbd>⌘ Cmd</kbd><u>+</u><kbd>F</kbd></td><td>Показує обʼєкти, що збігаються із зазначеним текстом</td></tr>
      <tr><td></td><th>Операції з виділеними обʼєктами</th></tr>
      <tr><td><svg width="26" height="40"><use href="#i-mouse-r"/></svg><em>-або-</em><svg width="28" height="40"><use href="#i-hold"/></svg><em>-або-</em><kbd>≡ Меню</kbd></td><td>Меню редагування</td></tr>
      <tr><td><kbd>Z</kbd></td><td>Масштабувати до виділених обʼєктів</td></tr>
      <tr><td></td><th>Операції з виділеними точками</th></tr>
      <tr><td><kbd>[</kbd><em>-або-</em><kbd>↖ PgUp</kbd></td><td>Перейти до попередньої точки</td></tr>
      <tr><td><kbd>]</kbd><em>-або-</em><kbd>↘ PgDn</kbd></td><td>Перейти до наступної точки</td></tr>
      <tr><td><kbd>{</kbd><em>-або-</em><kbd>⇞ Home</kbd></td><td>Перейти до першої точки</td></tr>
      <tr><td><kbd>}</kbd><em>-або-</em><kbd>⇟ End</kbd></td><td>Перейти до останньої точки</td></tr>
      <tr><td><kbd>⌘ Cmd</kbd><u>+</u><kbd>↑</kbd></td><td>Оберіть батьківську лінію</td></tr>
      <tr><td><kbd>\</kbd><em>-або-</em><kbd>Pause</kbd></td><td>Обрати іншу лінію</td></tr>
      <tr><td></td><th>Операції з виділеними лініями</th></tr>
      <tr><td><kbd>⌘ Cmd</kbd><u>+</u><kbd>↓</kbd></td><td>Виділити точки обʼєкта</td></tr>
    </table>
  </section>
</div>
</body>
</html>
```

FILE: styles.css
```css
* { box-sizing: border-box; }
body {
  margin: 0;
  font: 24px/32px Inter, "Liberation Sans", "DejaVu Sans", "Noto Sans CJK JP", sans-serif;
  color: #333;
  background: #000;
}
h2, h3, p { margin: 0; }
button, input { font: inherit; color: inherit; margin: 0; }
button { border: 0; background: none; padding: 0; }
a { color: #7092ff; text-decoration: none; }
svg { flex: none; }
.sprite { position: absolute; width: 0; height: 0; }

.app { display: flex; min-height: 100vh; }

/* Sidebar */
.sidebar {
  flex: 0 0 800px;
  display: flex;
  flex-direction: column;
  background: #f6f6f6;
  border-right: 2px solid #ddd;
}
.side-head {
  display: flex;
  align-items: center;
  justify-content: space-between;
  height: 132px;
  padding: 0 26px;
  background: #fff;
  border-bottom: 2px solid #ccc;
}
.side-head h2, .modal-head h2 { font-size: 38px; line-height: 48px; font-weight: 700; }
.icon-btn { display: flex; }
.side-body { flex: 1; display: flex; }
.side-content { flex: 1; padding: 38px 20px 0; min-width: 0; }
.track { display: flex; width: 20px; padding: 6px 6px 46px; border-left: 2px solid #e0e0e0; background: #fafafa; }
.thumb { width: 6px; border-radius: 3px; background: #c1c1c1; }
.section { margin: 58px 20px 20px; font-size: 28px; line-height: 50px; font-weight: 700; }
.section:first-child { margin-top: 0; }
.section a { display: flex; align-items: center; gap: 16px; padding-left: 3px; }
.preset {
  display: flex;
  align-items: stretch;
  width: calc(100% - 40px);
  height: 124px;
  margin: 0 20px;
  border: 2px solid #ccc;
  border-radius: 8px;
  overflow: hidden;
}
.preset-icon { display: flex; align-items: center; justify-content: center; width: 122px; padding-top: 4px; background: #fff; border-right: 2px solid #ccc; }
.preset-name { align-self: center; padding-left: 20px; font-weight: 700; }
.fields { display: flex; flex-direction: column; gap: 20px; padding: 20px; border-radius: 16px; background: #ececec; }
.field { border: 2px solid #ccc; border-radius: 8px; background: #fff; position: relative; }
.nested { margin-left: 20px; }
.nested::before { content: ""; position: absolute; left: calc(50% - 10px); top: -22px; width: 2px; height: 20px; background: #ccc; }
.field-label {
  display: flex;
  height: 58px;
  padding-left: 20px;
  line-height: 60px;
  font-weight: 700;
  background: #f6f6f6;
  border-radius: 8px 8px 0 0;
}
.field-label > :first-child { flex: 1; }
.field-label button { width: 64px; display: flex; align-items: center; justify-content: center; border-left: 2px solid #ccc; color: #808080; }
.row {
  display: flex;
  align-items: center;
  gap: 14px;
  width: 100%;
  height: 62px;
  padding: 0 20px;
  border: 0;
  border-top: 2px solid #ccc;
  background: none;
}
label.row { color: #7092ff; }
.check-row { height: 65px; }
.linkish { color: #7092ff; }
.row.access { height: 64px; color: #333; padding-bottom: 12px; }
.access span { flex: 1; }
.access input { flex: 1; border: 0; background: none; min-width: 0; }
input::placeholder { color: #a9a9a9; opacity: 1; }
.tick {
  appearance: none;
  display: flex;
  align-items: center;
  justify-content: center;
  width: 28px;
  height: 28px;
  border: 2px solid #ccc;
  border-radius: 6px;
  background: #f6f6f6;
}
.round { border-radius: 50%; }
.tick:checked::after { content: ""; width: 18px; height: 10px; margin-top: -4px; border: solid #222; border-width: 0 0 4px 4px; rotate: -45deg; }
.combo { display: flex; align-items: center; position: relative; }
.caret { position: absolute; right: 20px; border: solid transparent; border-width: 9px 10px 0; border-top-color: #bbb; }
.add-field { display: flex; align-items: center; justify-content: space-between; margin: 20px 20px 0; font-weight: 700; }
.boxed { width: 510px; height: 62px; border: 2px solid #ccc; border-radius: 8px; background: #fff; font-weight: 400; }
.boxed input { width: 100%; padding: 0 20px; border: 0; background: none; }
.add-relation { display: flex; align-items: center; justify-content: center; width: 288px; height: 62px; margin: 38px 20px 0; border-radius: 8px; background: #757575; color: #fff; }
.side-foot { height: 60px; padding: 0 38px; border-top: 2px solid #ccc; background: #f6f6f6; line-height: 58px; }
.side-foot a { display: flex; align-items: center; gap: 10px; }

/* Map */
.map { flex: 1; min-width: 0; position: relative; display: flex; flex-direction: column; overflow: hidden; color: #fff; }
.canvas { position: absolute; inset: 0; width: 100%; height: 100%; }
.map-label { font-size: 24px; font-weight: 700; fill: #333; stroke: #c8c8c8; stroke-width: 8px; stroke-linejoin: round; paint-order: stroke; }
.topbar {
  position: relative;
  display: flex;
  justify-content: space-between;
  height: 142px;
  padding: 20px 20px 0 14px;
  background: rgba(0, 0, 0, .5);
}
.tool { display: flex; flex-direction: column; align-items: center; gap: 4px; font-size: 22px; line-height: 32px; white-space: nowrap; }
.tool-pair { display: flex; gap: 16px; }
.joined { display: flex; gap: 2px; border-radius: 8px; overflow: hidden; }
.bar-btn { display: flex; align-items: center; justify-content: center; gap: 18px; height: 80px; padding: 0 31px 0 27px; background: #fff; color: #333; font-size: 24px; font-weight: 700; }
.tool > .bar-btn { border-radius: 8px; }
.square { width: 80px; padding: 0; }
.off { background: rgba(255, 255, 255, .2); color: #222; }
.save { width: 143px; gap: 28px; padding: 0; background: #3a3a38; color: #1c1c1c; }
.map-mid { flex: 1; position: relative; display: flex; align-items: flex-start; justify-content: space-between; padding: 150px 0 10px 10px; }
.bing { display: flex; align-items: center; gap: 8px; align-self: flex-end; font-size: 20px; color: #ccd0ff; }
.controls { display: flex; flex-direction: column; width: 80px; }
.controls button { display: flex; align-items: center; justify-content: center; height: 80px; background: rgba(0, 0, 0, .5); color: #fff; }
.control-gap { height: 20px; }
.bottombar { position: relative; display: flex; justify-content: space-between; height: 60px; padding-left: 20px; background: rgba(0, 0, 0, .5); line-height: 60px; }
.scale { display: flex; align-items: center; gap: 12px; }
.scale i { width: 232px; height: 16px; border: 2px solid #fff; border-top: 0; }
.about { display: flex; white-space: nowrap; }
.about p { display: flex; align-items: center; gap: 14px; padding: 0 10px; border-left: 2px solid #777; }
.about p:first-child { border: 0; }
.about p.tight { gap: 6px; }
.lang { font-size: 24px; }
.badge { padding: 0 8px; border-radius: 6px; background: #d32232; line-height: 44px; }

/* Dialog */
.shade { position: fixed; inset: 0; display: flex; justify-content: center; align-items: flex-start; padding-top: 192px; background: rgba(0, 0, 0, .5); overflow: auto; }
.modal { width: 90%; max-width: 2100px; padding-bottom: 44px; border-radius: 8px; background: #fff; }
.modal-head { display: flex; align-items: center; height: 132px; padding: 0 26px 0 54px; border-bottom: 2px solid #ccc; }
.modal-head h2 { flex: 1; text-align: center; }
.modal-head .icon-btn { padding-bottom: 8px; }
.tabs { display: flex; justify-content: center; gap: 20px; padding: 20px 0 36px; font-size: 32px; font-weight: 700; line-height: 70px; }
.tabs a { padding: 2px 20px 0; color: #666; border-bottom: 4px solid transparent; }
.tabs .active { color: #7092ff; border-color: #7092ff; }
.keys { width: 100%; table-layout: fixed; border-collapse: collapse; }
.near col:first-child { width: 48.1%; }
.far { margin-top: 30px; }
.far col:first-child { width: 44.1%; }
.keys td, .keys th { height: 52px; padding: 0; text-align: left; vertical-align: middle; white-space: nowrap; }
.keys th { height: 100px; padding-top: 30px; font-size: 32px; line-height: 40px; }
.keys tr:first-child th { height: 70px; padding-top: 0; }
.keys td:first-child { display: flex; align-items: center; justify-content: flex-end; padding-right: 25px; }
kbd {
  min-width: 44px;
  height: 44px;
  padding: 0 10px;
  border: 2px solid #ccc;
  border-bottom: 4px solid #bbb;
  border-radius: 6px;
  background: #fcfcfc;
  font: 22px/40px Inter, "DejaVu Sans", sans-serif;
  color: #555;
  text-align: center;
}
.keys s, .keys u, .keys em { color: #777; text-align: center; text-decoration: none; font-style: normal; }
.keys s { width: 15px; }
.keys u { width: 23px; }
.keys em { padding: 0 11px; }
.keys td svg { margin: 0 4px; }
.gesture { color: #333; }
```
